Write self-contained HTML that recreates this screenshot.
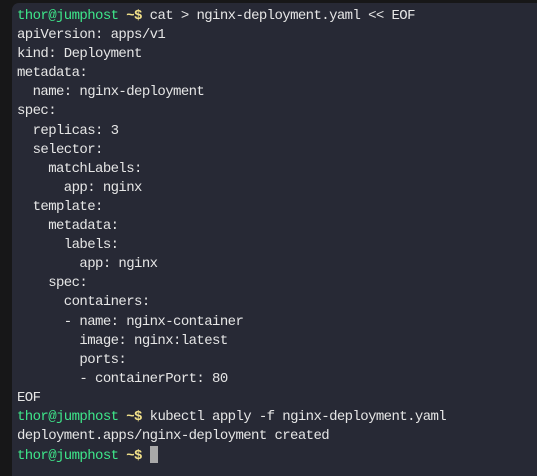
<!DOCTYPE html>
<html><head><meta charset="utf-8"><style>
html,body{margin:0;padding:0;width:537px;height:476px;background:#171718;overflow:hidden}
.p{position:absolute;left:12px;top:3px;right:0;bottom:0;background:#272935;border-top-left-radius:7px}
pre{position:absolute;left:17px;top:7px;margin:0;font-family:"Liberation Mono",monospace;font-size:14px;letter-spacing:-0.6px;line-height:19.1px;color:#e6e6e6}
.g{color:#3ee68a}.y{color:#f3e28a;font-weight:bold}
.c{display:inline-block;width:8px;height:17px;background:#a8a8a8;vertical-align:-4px}
</style></head><body><div class="p"></div>
<pre><span class="g">thor@jumphost</span> <span class="y">~$</span> cat &gt; nginx-deployment.yaml &lt;&lt; EOF
apiVersion: apps/v1
kind: Deployment
metadata:
  name: nginx-deployment
spec:
  replicas: 3
  selector:
    matchLabels:
      app: nginx
  template:
    metadata:
      labels:
        app: nginx
    spec:
      containers:
      - name: nginx-container
        image: nginx:latest
        ports:
        - containerPort: 80
EOF
<span class="g">thor@jumphost</span> <span class="y">~$</span> kubectl apply -f nginx-deployment.yaml
deployment.apps/nginx-deployment created
<span class="g">thor@jumphost</span> <span class="y">~$</span> <span class="c"></span></pre>
</body></html>
